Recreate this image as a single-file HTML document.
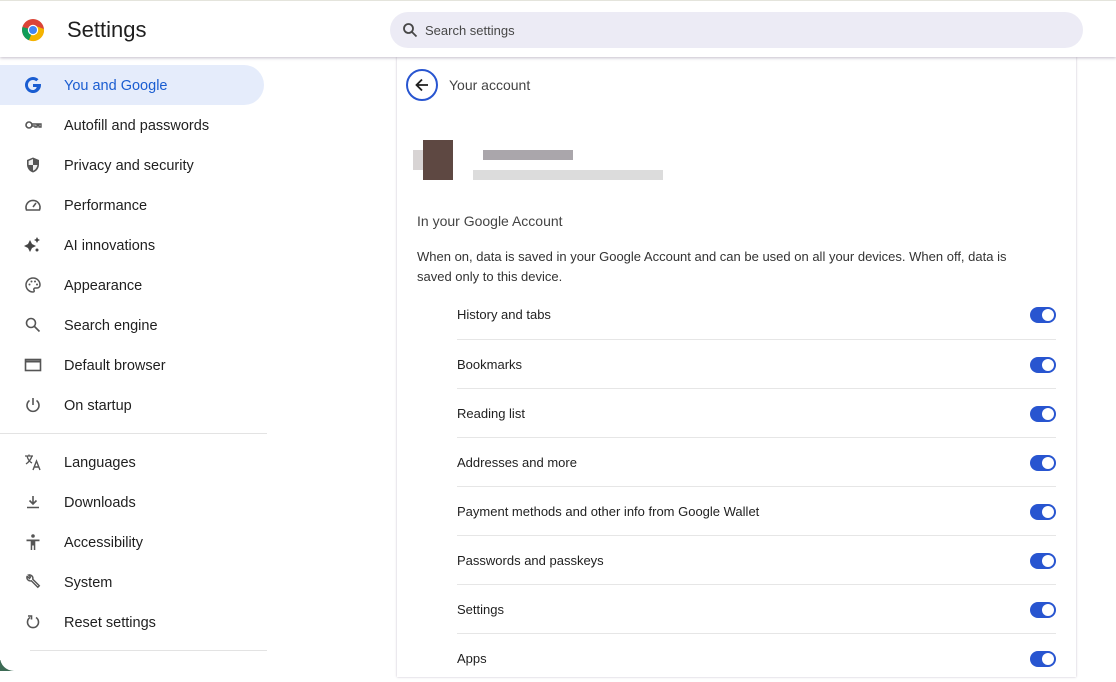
<!DOCTYPE html>
<html><head><meta charset="utf-8"><style>
*{box-sizing:border-box;margin:0;padding:0}
body{width:1116px;height:671px;overflow:hidden;background:#fff;font-family:"Liberation Sans",Arial,sans-serif;color:#1f1f1f;position:relative}
.top{position:absolute;left:0;top:0;width:1116px;height:57px;background:#fff;box-shadow:0 1px 3px rgba(60,40,80,.3);z-index:5;border-top:1px solid #e4e4dc}
.title{position:absolute;left:67px;top:16px;font-size:22px;color:#1f1f1f}
.search{position:absolute;left:390px;top:11px;width:693px;height:36px;border-radius:18px;background:#ecebf5}
.search span{position:absolute;left:35px;top:11px;font-size:13px;color:#474747}
.nav{position:absolute;left:0;top:57px;width:270px}
.item{position:absolute;left:0;height:40px;width:264px;font-size:14.5px;color:#1f1f1f}
.item .t{position:absolute;left:64px;top:13px}
.item svg{position:absolute;left:24px;top:11px}
.sel{background:#e5ecfb;border-radius:0 20px 20px 0;color:#1a5dd1}
.hr{position:absolute;left:0;width:267px;height:1px;background:#e3e3e3}
.card{position:absolute;left:397px;top:57px;width:679px;height:620px;background:#fff;box-shadow:0 0 2px rgba(80,60,100,.35)}
.row{position:absolute;left:60px;width:599px;height:49px;border-top:1px solid #e6e6e6;font-size:13px}
.row .t{position:absolute;left:0;top:17px}
.tg{position:absolute;right:0;top:17px;width:26px;height:16px;border-radius:8px;background:#2855d0}
.tg:after{content:"";position:absolute;right:2px;top:2px;width:12px;height:12px;border-radius:6px;background:#fff}
</style></head><body>
<div class="top">
<svg style="position:absolute;left:21px;top:17px" width="24" height="24" viewBox="0 0 24 24"><circle cx="12" cy="12" r="11" fill="#db4437"/><path d="M12 12 L1.5 9 A11 11 0 0 0 8 22.3Z" fill="#0f9d58"/><path d="M12 12 L8 22.3 A11 11 0 0 0 23 11 L12 7Z" fill="#f4b400"/><circle cx="12" cy="12" r="5.2" fill="#fff"/><circle cx="12" cy="12" r="4" fill="#4285f4"/></svg>
<div class="title">Settings</div>
<div class="search"><svg style="position:absolute;left:12px;top:10px" width="16" height="16" viewBox="0 0 16 16"><circle cx="6.5" cy="6.5" r="4.5" fill="none" stroke="#474747" stroke-width="1.8"/><path d="M10 10l4.5 4.5" stroke="#474747" stroke-width="1.8"/></svg><span>Search settings</span></div>
</div>
<div class="nav">
<div class="item sel" style="top:8px"><svg width="18" height="18" viewBox="0 0 18 18"><path d="M15.5 8H9v3h3.7c-.4 1.8-2 3-3.7 3a5 5 0 1 1 3.3-8.7l2.2-2.1A8 8 0 1 0 17 9c0-.3 0-.7-.1-1z" fill="#1a5dd1"/></svg><span class="t">You and Google</span></div>
<div class="item" style="top:48px"><svg width="18" height="18" viewBox="0 0 18 18"><circle cx="5" cy="9" r="3" fill="none" stroke="#555" stroke-width="1.6"/><path d="M8 8h9v3h-2v-1.5h-2V11h-2V10H8" fill="none" stroke="#555" stroke-width="1.4"/></svg><span class="t">Autofill and passwords</span></div>
<div class="item" style="top:88px"><svg width="18" height="18" viewBox="0 0 18 18"><path d="M9 1.5l6 2.5v4.5c0 4-2.7 7-6 8-3.3-1-6-4-6-8V4z" fill="#555"/><path d="M9 3v6H4.6V5zM9 9h4.4c-.4 2.7-2.2 5-4.4 5.8z" fill="#fff" opacity=".9"/></svg><span class="t">Privacy and security</span></div>
<div class="item" style="top:128px"><svg width="18" height="18" viewBox="0 0 18 18"><path d="M2.5 14A7 7 0 1 1 15.5 14z" fill="none" stroke="#555" stroke-width="1.6"/><path d="M9 11l3-4" stroke="#555" stroke-width="1.6"/></svg><span class="t">Performance</span></div>
<div class="item" style="top:168px"><svg width="18" height="18" viewBox="0 0 18 18"><path d="M6 4l2 4 4 2-4 2-2 4-2-4-4-2 4-2z" fill="#444"/><path d="M13 1l1 2 2 1-2 1-1 2-1-2-2-1 2-1z" fill="#444"/><circle cx="13" cy="14" r="1.5" fill="#444"/></svg><span class="t">AI innovations</span></div>
<div class="item" style="top:208px"><svg width="18" height="18" viewBox="0 0 18 18"><path d="M9 2a7 7 0 0 0 0 14c1.2 0 1.5-1 1-1.8-.6-1 0-2.2 1.2-2.2H13a3 3 0 0 0 3-3C16 5 13 2 9 2z" fill="none" stroke="#555" stroke-width="1.5"/><circle cx="5.5" cy="8.5" r="1" fill="#555"/><circle cx="7.5" cy="5.5" r="1" fill="#555"/><circle cx="11" cy="5.5" r="1" fill="#555"/><circle cx="13" cy="8.5" r="1" fill="#555"/></svg><span class="t">Appearance</span></div>
<div class="item" style="top:248px"><svg width="18" height="18" viewBox="0 0 18 18"><circle cx="7" cy="7" r="4.5" fill="none" stroke="#555" stroke-width="1.6"/><path d="M10.5 10.5l5 5" stroke="#555" stroke-width="1.6"/></svg><span class="t">Search engine</span></div>
<div class="item" style="top:288px"><svg width="18" height="18" viewBox="0 0 18 18"><rect x="1.5" y="3.5" width="15" height="11" fill="none" stroke="#555" stroke-width="1.6"/><path d="M1.5 5.5h15" stroke="#555" stroke-width="2"/></svg><span class="t">Default browser</span></div>
<div class="item" style="top:328px"><svg width="18" height="18" viewBox="0 0 18 18"><path d="M5.5 4.5a6 6 0 1 0 7 0" fill="none" stroke="#555" stroke-width="1.6"/><path d="M9 2v7" stroke="#555" stroke-width="1.6"/></svg><span class="t">On startup</span></div>
<div class="hr" style="top:376px"></div>
<div class="item" style="top:385px"><svg width="18" height="18" viewBox="0 0 18 18"><path d="M1 3h8M5 1.5V3M3 3c1 4 3 6 5 7M8 3c-1 3-3 6-6 8" fill="none" stroke="#555" stroke-width="1.3"/><path d="M9 17l3.5-9 3.5 9M10.3 14h4.4" fill="none" stroke="#555" stroke-width="1.4"/></svg><span class="t">Languages</span></div>
<div class="item" style="top:425px"><svg width="18" height="18" viewBox="0 0 18 18"><path d="M9 3v8M5.5 7.5L9 11l3.5-3.5M3 14.5h12" fill="none" stroke="#555" stroke-width="1.6"/></svg><span class="t">Downloads</span></div>
<div class="item" style="top:465px"><svg width="18" height="18" viewBox="0 0 18 18"><circle cx="9" cy="3" r="1.8" fill="#555"/><path d="M2.5 6.5h13v1.8h-4.2V17H9.8v-4.5H8.2V17H6.7V8.3H2.5z" fill="#555"/></svg><span class="t">Accessibility</span></div>
<div class="item" style="top:505px"><svg width="18" height="18" viewBox="0 0 18 18"><path d="M3 3.5a3.5 3.5 0 0 0 4.3 4.3l6.5 6.5 1.5-1.5-6.5-6.5A3.5 3.5 0 0 0 4.5 2l2 2-1 1.5-2-2z" fill="none" stroke="#555" stroke-width="1.4"/></svg><span class="t">System</span></div>
<div class="item" style="top:545px"><svg width="18" height="18" viewBox="0 0 18 18"><path d="M6 4.5a5.5 5.5 0 1 0 6 0" fill="none" stroke="#555" stroke-width="1.6"/><path d="M4 3h3.5v3.5" fill="none" stroke="#555" stroke-width="1.6"/></svg><span class="t">Reset settings</span></div>
<div class="hr" style="top:593px"></div>
</div>
<div style="position:absolute;left:0;top:660px;width:14px;height:11px;background:#3d6b55"></div>
<div style="position:absolute;left:0;top:650px;width:30px;height:21px;background:#fff;border-bottom-left-radius:14px"></div>
<div class="card">
<div style="position:absolute;left:9px;top:12px;width:32px;height:32px;border:2px solid #2855d0;border-radius:50%"><svg style="position:absolute;left:6px;top:6px" width="16" height="16" viewBox="0 0 16 16"><path d="M14 8H2.5M8 2.5L2.5 8 8 13.5" fill="none" stroke="#1f1f1f" stroke-width="1.8"/></svg></div>
<div style="position:absolute;left:52px;top:20px;font-size:14px;color:#444">Your account</div>
<div style="position:absolute;left:26px;top:83px;width:30px;height:40px;background:#5e4842"></div>
<div style="position:absolute;left:16px;top:93px;width:10px;height:20px;background:#d8d4d4"></div>
<div style="position:absolute;left:86px;top:93px;width:90px;height:10px;background:#aaa6ab"></div>
<div style="position:absolute;left:76px;top:113px;width:190px;height:10px;background:#dcdcdc"></div>
<div style="position:absolute;left:20px;top:156px;font-size:14px;color:#444">In your Google Account</div>
<div style="position:absolute;left:20px;top:190px;width:625px;font-size:13px;line-height:20px;color:#333">When on, data is saved in your Google Account and can be used on all your devices. When off, data is saved only to this device.</div>
<div class="row" style="top:233px;border-top:none"><span class="t">History and tabs</span><div class="tg"></div></div>
<div class="row" style="top:282px"><span class="t">Bookmarks</span><div class="tg"></div></div>
<div class="row" style="top:331px"><span class="t">Reading list</span><div class="tg"></div></div>
<div class="row" style="top:380px"><span class="t">Addresses and more</span><div class="tg"></div></div>
<div class="row" style="top:429px"><span class="t">Payment methods and other info from Google Wallet</span><div class="tg"></div></div>
<div class="row" style="top:478px"><span class="t">Passwords and passkeys</span><div class="tg"></div></div>
<div class="row" style="top:527px"><span class="t">Settings</span><div class="tg"></div></div>
<div class="row" style="top:576px"><span class="t">Apps</span><div class="tg"></div></div>
</div>
</body></html>
